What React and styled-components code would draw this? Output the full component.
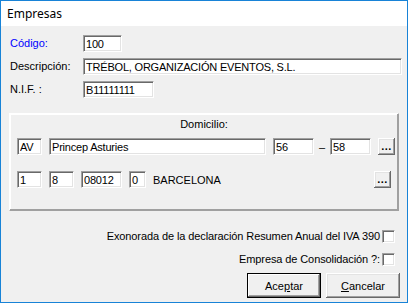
import React from "react";
import styled, { createGlobalStyle } from "styled-components";

const Global = createGlobalStyle`
  html, body {
    margin: 0;
    padding: 0;
    background: #f0f0f0;
  }
  * {
    box-sizing: border-box;
  }
`;

function App() {
  return (
    <>
      <Global />
      <Window>
        <TitleBar>Empresas</TitleBar>
        <Body>
          <Fields>
            <Label $blue>Código:</Label>
            <Input $w={39} defaultValue="100" />
            <Label>Descripción:</Label>
            <Input $w={319} defaultValue="TRÉBOL, ORGANIZACIÓN EVENTOS, S.L." />
            <Label>N.I.F. :</Label>
            <Input $w={71} defaultValue="B11111111" />
          </Fields>

          <Group>
            <GroupTitle>Domicilio:</GroupTitle>
            <GroupRow>
              <Input $w={25} defaultValue="AV" />
              <Input $w={217} defaultValue="Princep Asturies" />
              <Input $w={41} defaultValue="56" />
              <Dash>–</Dash>
              <Input $w={41} defaultValue="58" />
              <DotsButton>...</DotsButton>
            </GroupRow>
            <GroupRow>
              <Input $w={25} defaultValue="1" />
              <Input $w={25} defaultValue="8" />
              <Input $w={41} defaultValue="08012" />
              <Input $w={17} defaultValue="0" />
              <City>BARCELONA</City>
              <DotsButton>...</DotsButton>
            </GroupRow>
          </Group>

          <CheckRow $top={19}>
            Exonorada de la declaración Resumen Anual del IVA 390
            <Check />
          </CheckRow>
          <CheckRow $top={10}>
            Empresa de Consolidación ?:
            <Check />
          </CheckRow>

          <Buttons>
            <Button $default>
              Ace<u>p</u>tar
            </Button>
            <Button>
              <u>C</u>ancelar
            </Button>
          </Buttons>
        </Body>
      </Window>
    </>
  );
}

const Window = styled.div`
  width: 408px;
  height: 303px;
  border: 1px solid #1883d7;
  display: flex;
  flex-direction: column;
  background: #f0f0f0;
  font-family: "Liberation Sans", Arial, sans-serif;
  font-size: 11px;
  color: #000;
`;

const TitleBar = styled.div`
  height: 25px;
  flex: none;
  background: #fff;
  padding-left: 6px;
  display: flex;
  align-items: center;
  font-family: "Noto Sans", "Open Sans", sans-serif;
  font-size: 12px;
`;

const Body = styled.div`
  flex: 1;
  display: flex;
  flex-direction: column;
  padding: 9px 5px 4px 8px;
`;

const Fields = styled.div`
  display: grid;
  grid-template-columns: 73px auto;
  row-gap: 6px;
  justify-items: start;
  padding-left: 1px;
`;

const Label = styled.span`
  color: ${(p) => (p.$blue ? "#0000ff" : "#000")};
  padding-top: 2px;
  line-height: 13px;
`;

const Input = styled.input`
  width: ${(p) => p.$w}px;
  height: 17px;
  flex: none;
  margin: 0;
  padding: 1px 2px 0;
  font: inherit;
  letter-spacing: -0.2px;
  color: #000;
  background: #fff;
  border: 1px solid;
  border-color: #a0a0a0 #fff #fff #a0a0a0;
  box-shadow: inset 1px 1px #696969, inset -1px -1px #e3e3e3;
  outline: none;
`;

const Group = styled.div`
  margin-top: 15px;
  margin-right: 3px;
  height: 98px;
  border: 1px solid;
  border-color: #fff #a0a0a0 #a0a0a0 #fff;
  box-shadow: -1px -1px 0 #a0a0a0 inset, 1px 1px 0 #fff inset;
  padding: 4px 7px 0 7px;
  display: flex;
  flex-direction: column;
`;

const GroupTitle = styled.div`
  text-align: center;
  line-height: 13px;
  margin-bottom: 7px;
`;

const GroupRow = styled.div`
  display: flex;
  align-items: center;
  gap: 7px;
  & + & {
    margin-top: 16px;
  }
`;

const Dash = styled.span`
  width: 16px;
  margin: 0 -7px;
  text-align: center;
  flex: none;
`;

const City = styled.span`
  flex: 1;
  padding-top: 1px;
`;

const raised = `
  background: #f0f0f0;
  border: none;
  box-shadow: inset -1px -1px #696969, inset 1px 1px #fff,
    inset -2px -2px #a0a0a0, inset 2px 2px #e3e3e3;
  font: inherit;
  color: #000;
  padding: 0;
`;

const DotsButton = styled.button`
  ${raised}
  width: 17px;
  height: 17px;
  margin-left: auto;
  font-weight: bold;
  line-height: 17px;
  letter-spacing: 0.5px;
  flex: none;
`;

const CheckRow = styled.label`
  display: flex;
  justify-content: flex-end;
  align-items: center;
  gap: 2px;
  margin-top: ${(p) => p.$top}px;
  padding-right: 7px;
  line-height: 13px;
  letter-spacing: -0.1px;
`;

const Check = styled.span`
  width: 13px;
  height: 13px;
  background: #fff;
  border: 1px solid;
  border-color: #a0a0a0 #fff #fff #a0a0a0;
  box-shadow: inset 1px 1px #696969, inset -1px -1px #e3e3e3;
  flex: none;
`;

const Buttons = styled.div`
  margin-top: auto;
  display: flex;
  justify-content: flex-end;
  gap: 5px;
  padding-right: 2px;
`;

const Button = styled.button`
  ${raised}
  width: 74px;
  height: 25px;
  ${(p) =>
    p.$default &&
    `
    outline: 1px solid #000;
    outline-offset: -1px;
    box-shadow: inset -2px -2px #696969, inset 2px 2px #fff,
      inset -3px -3px #a0a0a0;
  `}
  u {
    text-decoration: underline;
  }
`;

export default App;
